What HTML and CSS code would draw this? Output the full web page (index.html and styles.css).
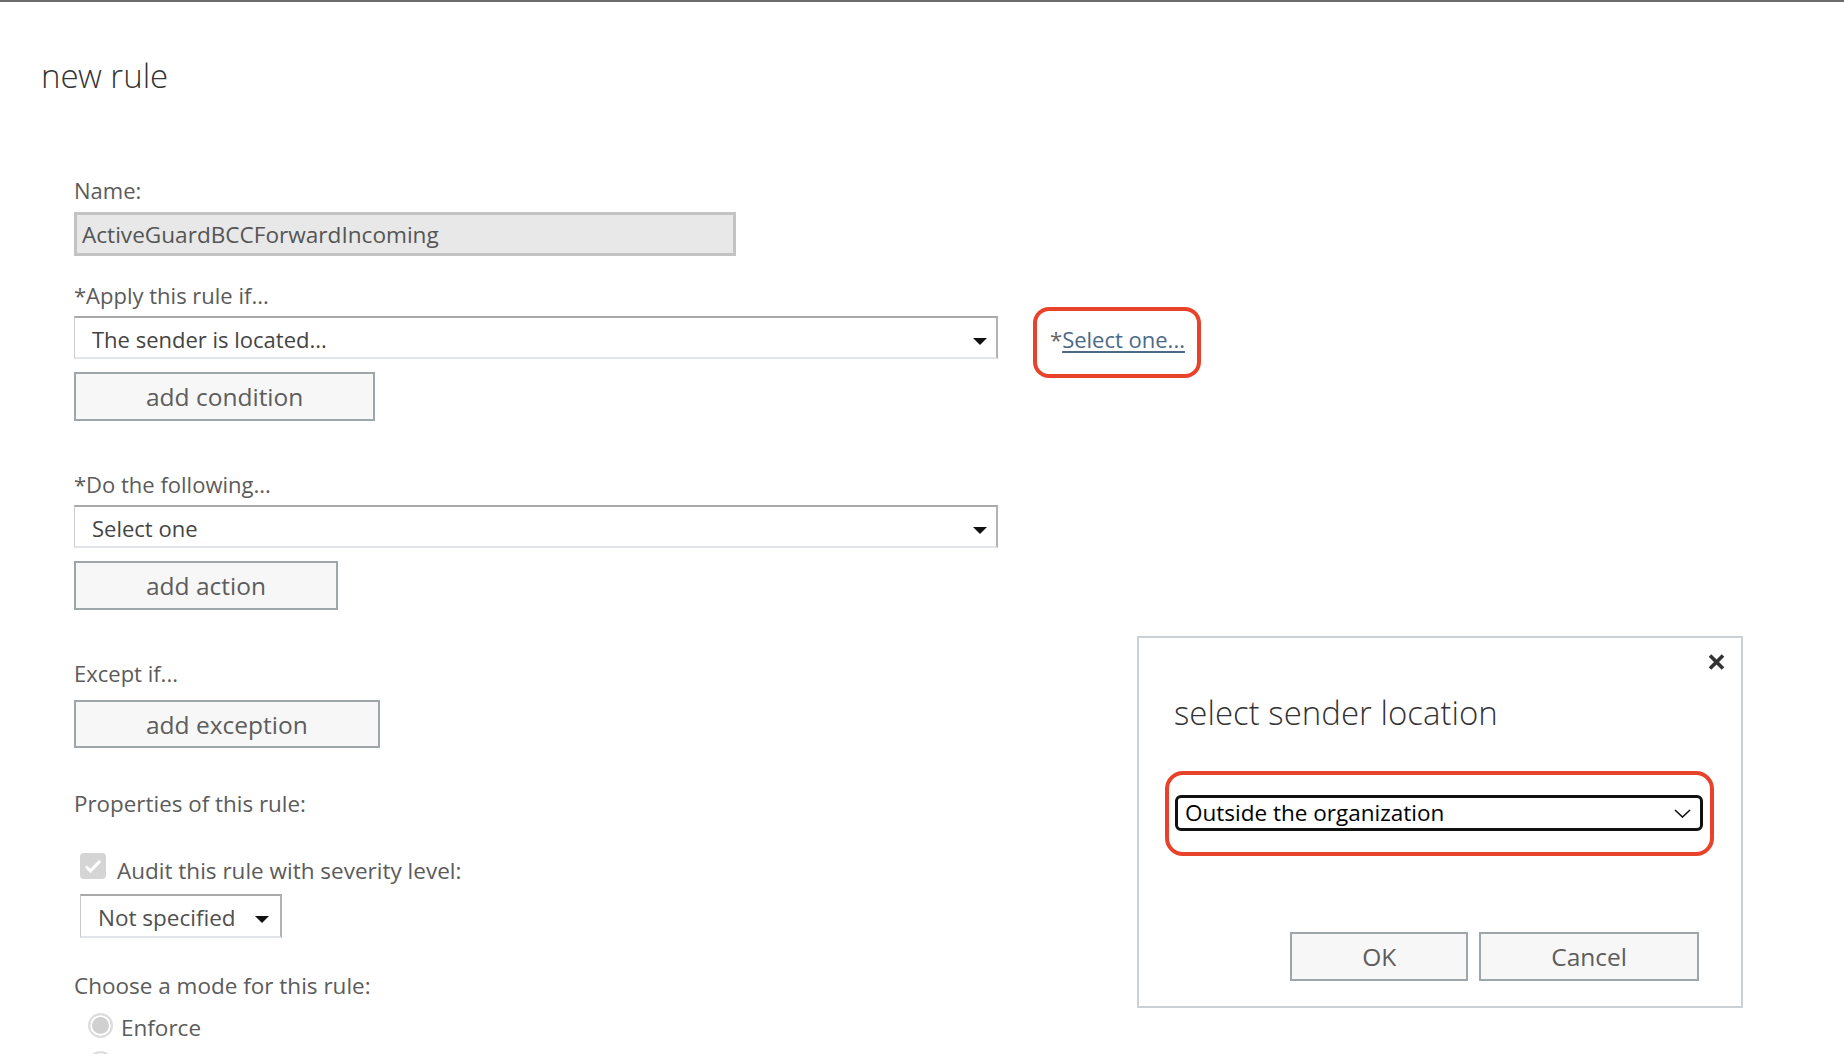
FILE: index.html
```html
<!DOCTYPE html>
<html lang="en">
<head>
    <meta charset="UTF-8">
    <meta name="viewport" content="width=device-width, initial-scale=1.0">
    <title>new rule</title>
    <link rel="stylesheet" href="styles.css">
</head>
<body>

    <!-- Rule editor -->
    <main class="page">
        <h1 class="page-title">new rule</h1>

        <form class="rule-form">
            <label class="field-label" for="rule-name">Name:</label>
            <input class="text-input" id="rule-name" type="text" value="ActiveGuardBCCForwardIncoming" readonly>

            <div class="field-label apply-label">*Apply this rule if...</div>
            <div class="select-row">
                <div class="select select-wide">
                    <span>The sender is located...</span>
                    <svg class="caret" width="14" height="7" viewBox="0 0 14 7"><path d="M0 0h14L7 7z" fill="#111"/></svg>
                </div>
                <span class="pick-link">*<a href="#">Select one...</a></span>
            </div>
            <button type="button" class="button">add condition</button>

            <div class="field-label section-label">*Do the following...</div>
            <div class="select-row">
                <div class="select select-wide">
                    <span>Select one</span>
                    <svg class="caret" width="14" height="7" viewBox="0 0 14 7"><path d="M0 0h14L7 7z" fill="#111"/></svg>
                </div>
            </div>
            <button type="button" class="button action-button">add action</button>

            <div class="field-label except-label">Except if...</div>
            <button type="button" class="button">add exception</button>

            <div class="field-label props-label">Properties of this rule:</div>
            <div class="check-row">
                <span class="checkbox">
                    <svg width="18" height="14" viewBox="0 0 18 14"><path d="M2 7.5l4.5 4.5L16 2" fill="none" stroke="#fff" stroke-width="3"/></svg>
                </span>
                <span class="check-text">Audit this rule with severity level:</span>
            </div>
            <div class="select select-small">
                <span>Not specified</span>
                <svg class="caret" width="14" height="7" viewBox="0 0 14 7"><path d="M0 0h14L7 7z" fill="#111"/></svg>
            </div>

            <div class="field-label mode-label">Choose a mode for this rule:</div>
            <div class="radio-row first">
                <span class="radio"></span>
                <span>Enforce</span>
            </div>
            <div class="radio-row">
                <span class="radio" aria-label="Test with Policy Tips"></span>
            </div>
        </form>
    </main>

    <!-- Sender location picker -->
    <div class="dialog">
        <button type="button" class="dialog-close" aria-label="close">
            <svg width="17" height="16" viewBox="0 0 17 16"><path d="M2 1.5l13 13M15 1.5l-13 13" stroke="#333" stroke-width="3.6"/></svg>
        </button>
        <h2 class="dialog-title">select sender location</h2>
        <div class="location-select">
            <span>Outside the organization</span>
            <svg width="17" height="9" viewBox="0 0 17 9"><path d="M1 1l7.5 7L16 1" fill="none" stroke="#111" stroke-width="1.6"/></svg>
        </div>
        <div class="dialog-buttons">
            <button type="button" class="button">OK</button>
            <button type="button" class="button">Cancel</button>
        </div>
    </div>

</body>
</html>
```

FILE: styles.css
```css
/* General Styles */
* {
    box-sizing: border-box;
}

body {
    margin: 0;
    border-top: 2px solid #6b6b6b;
    font-family: "Open Sans", "Noto Sans", Arial, sans-serif;
    color: #5b5b5b;
    background: #fff;
    position: relative;
    height: 1054px;
    overflow: hidden;
}

.page {
    padding: 54px 0 0 41px;
}

.page-title,
.dialog-title {
    margin: 0;
    font-family: "Open Sans Light", "Open Sans", "Noto Sans", sans-serif;
    font-size: 33px;
    font-weight: 300;
    line-height: 40px;
    color: #333;
}

/* Form */
.rule-form {
    margin: 81px 0 0 33px;
}

.field-label {
    display: block;
    font-size: 22px;
    line-height: 26px;
}

.apply-label {
    margin-top: 26px;
}

.section-label {
    margin-top: 50px;
}

.except-label {
    margin-top: 50px;
}

.props-label {
    margin-top: 43px;
    font-size: 22.4px;
}

.mode-label {
    margin-top: 35px;
    font-size: 22.5px;
}

.text-input {
    display: block;
    margin-top: 9px;
    width: 662px;
    height: 44px;
    padding: 0 5px;
    border: 3px solid #c3c3c3;
    background: #e8e8e8;
    font: inherit;
    font-size: 22.6px;
    color: #555;
    outline: none;
}

/* Drop-downs */
.select-row {
    display: flex;
    align-items: flex-start;
    margin-top: 8px;
}

.select {
    display: flex;
    align-items: center;
    justify-content: space-between;
    height: 43px;
    padding: 3px 9px 0 17px;
    border: 1px solid #cbcbcb;
    border-top: 2px solid #a9a9a9;
    border-right: 2px solid #b2b2b2;
    border-bottom: 2px solid #e1e5e9;
    background: #fff;
    color: #444;
    font-size: 22px;
    line-height: 26px;
}

.select .caret {
    margin-top: 5px;
}

.select-wide {
    width: 924px;
}

.select-small {
    width: 202px;
    height: 44px;
    margin: 10px 0 0 6px;
    padding-right: 11px;
    color: #505050;
    font-size: 22.5px;
}

.select-small .caret {
    margin-top: 3px;
}

/* "Select one..." link with its red call-out ring */
.pick-link {
    position: relative;
    margin: 10px 0 0 52px;
    font-size: 22px;
    line-height: 26px;
    color: #666;
}

.pick-link a {
    color: #4a6a87;
    text-decoration: underline;
    text-underline-offset: 3px;
}

.pick-link::before {
    content: "";
    position: absolute;
    top: -19px;
    bottom: -26px;
    left: -17px;
    right: -16px;
    border: 4px solid #e8432a;
    border-radius: 16px;
}

/* Buttons */
.button {
    display: block;
    height: 49px;
    padding: 0 70px;
    border: 2px solid #9ea6aa;
    background: #f7f7f7;
    font: inherit;
    font-size: 24.5px;
    line-height: 43px;
    color: #5d5d5d;
}

.select-row + .button {
    margin-top: 13px;
}

.except-label + .button {
    margin-top: 14px;
    height: 48px;
}

/* Checkbox */
.check-row {
    display: flex;
    align-items: flex-start;
    margin: 36px 0 0 6px;
}

.checkbox {
    display: flex;
    align-items: center;
    justify-content: center;
    width: 26px;
    height: 26px;
    border-radius: 4px;
    background: #d5d5d5;
}

.check-text {
    margin: 5px 0 0 11px;
    font-size: 22.5px;
    line-height: 26px;
}

/* Radio buttons */
.radio-row {
    display: flex;
    align-items: center;
    height: 36px;
    margin-left: 14px;
    font-size: 22.5px;
    line-height: 26px;
}

.radio-row.first {
    height: 40px;
    margin-top: 9px;
}

.radio {
    flex: none;
    width: 25px;
    height: 25px;
    margin: -5px 8px 0 0;
    border-radius: 50%;
    border: 2px solid #dcdcdc;
    background: #d0d0d0;
    box-shadow: inset 0 0 0 2px #fff;
}

/* Dialog window */
.dialog {
    position: absolute;
    left: 1137px;
    top: 634px;
    width: 606px;
    padding: 55px 42px 25px 36px;
    border: 2px solid #ccd1d5;
    background: #fff;
}

.dialog-close {
    position: absolute;
    top: 16px;
    right: 16px;
    padding: 0;
    border: 0;
    background: none;
    line-height: 0;
}

.dialog-title {
    margin-left: -1px;
}

.location-select {
    position: relative;
    display: flex;
    align-items: center;
    justify-content: space-between;
    width: 528px;
    height: 36px;
    margin-top: 62px;
    padding: 0 9px 0 7px;
    border: 3px solid #111;
    border-radius: 6px;
    font-size: 22.5px;
    line-height: 26px;
    color: #000;
}

.location-select::before {
    content: "";
    position: absolute;
    top: -27px;
    bottom: -28px;
    left: -13px;
    right: -14px;
    border: 4px solid #e8432a;
    border-radius: 18px;
}

.dialog-buttons {
    display: flex;
    justify-content: flex-end;
    gap: 11px;
    margin-top: 101px;
}
```
